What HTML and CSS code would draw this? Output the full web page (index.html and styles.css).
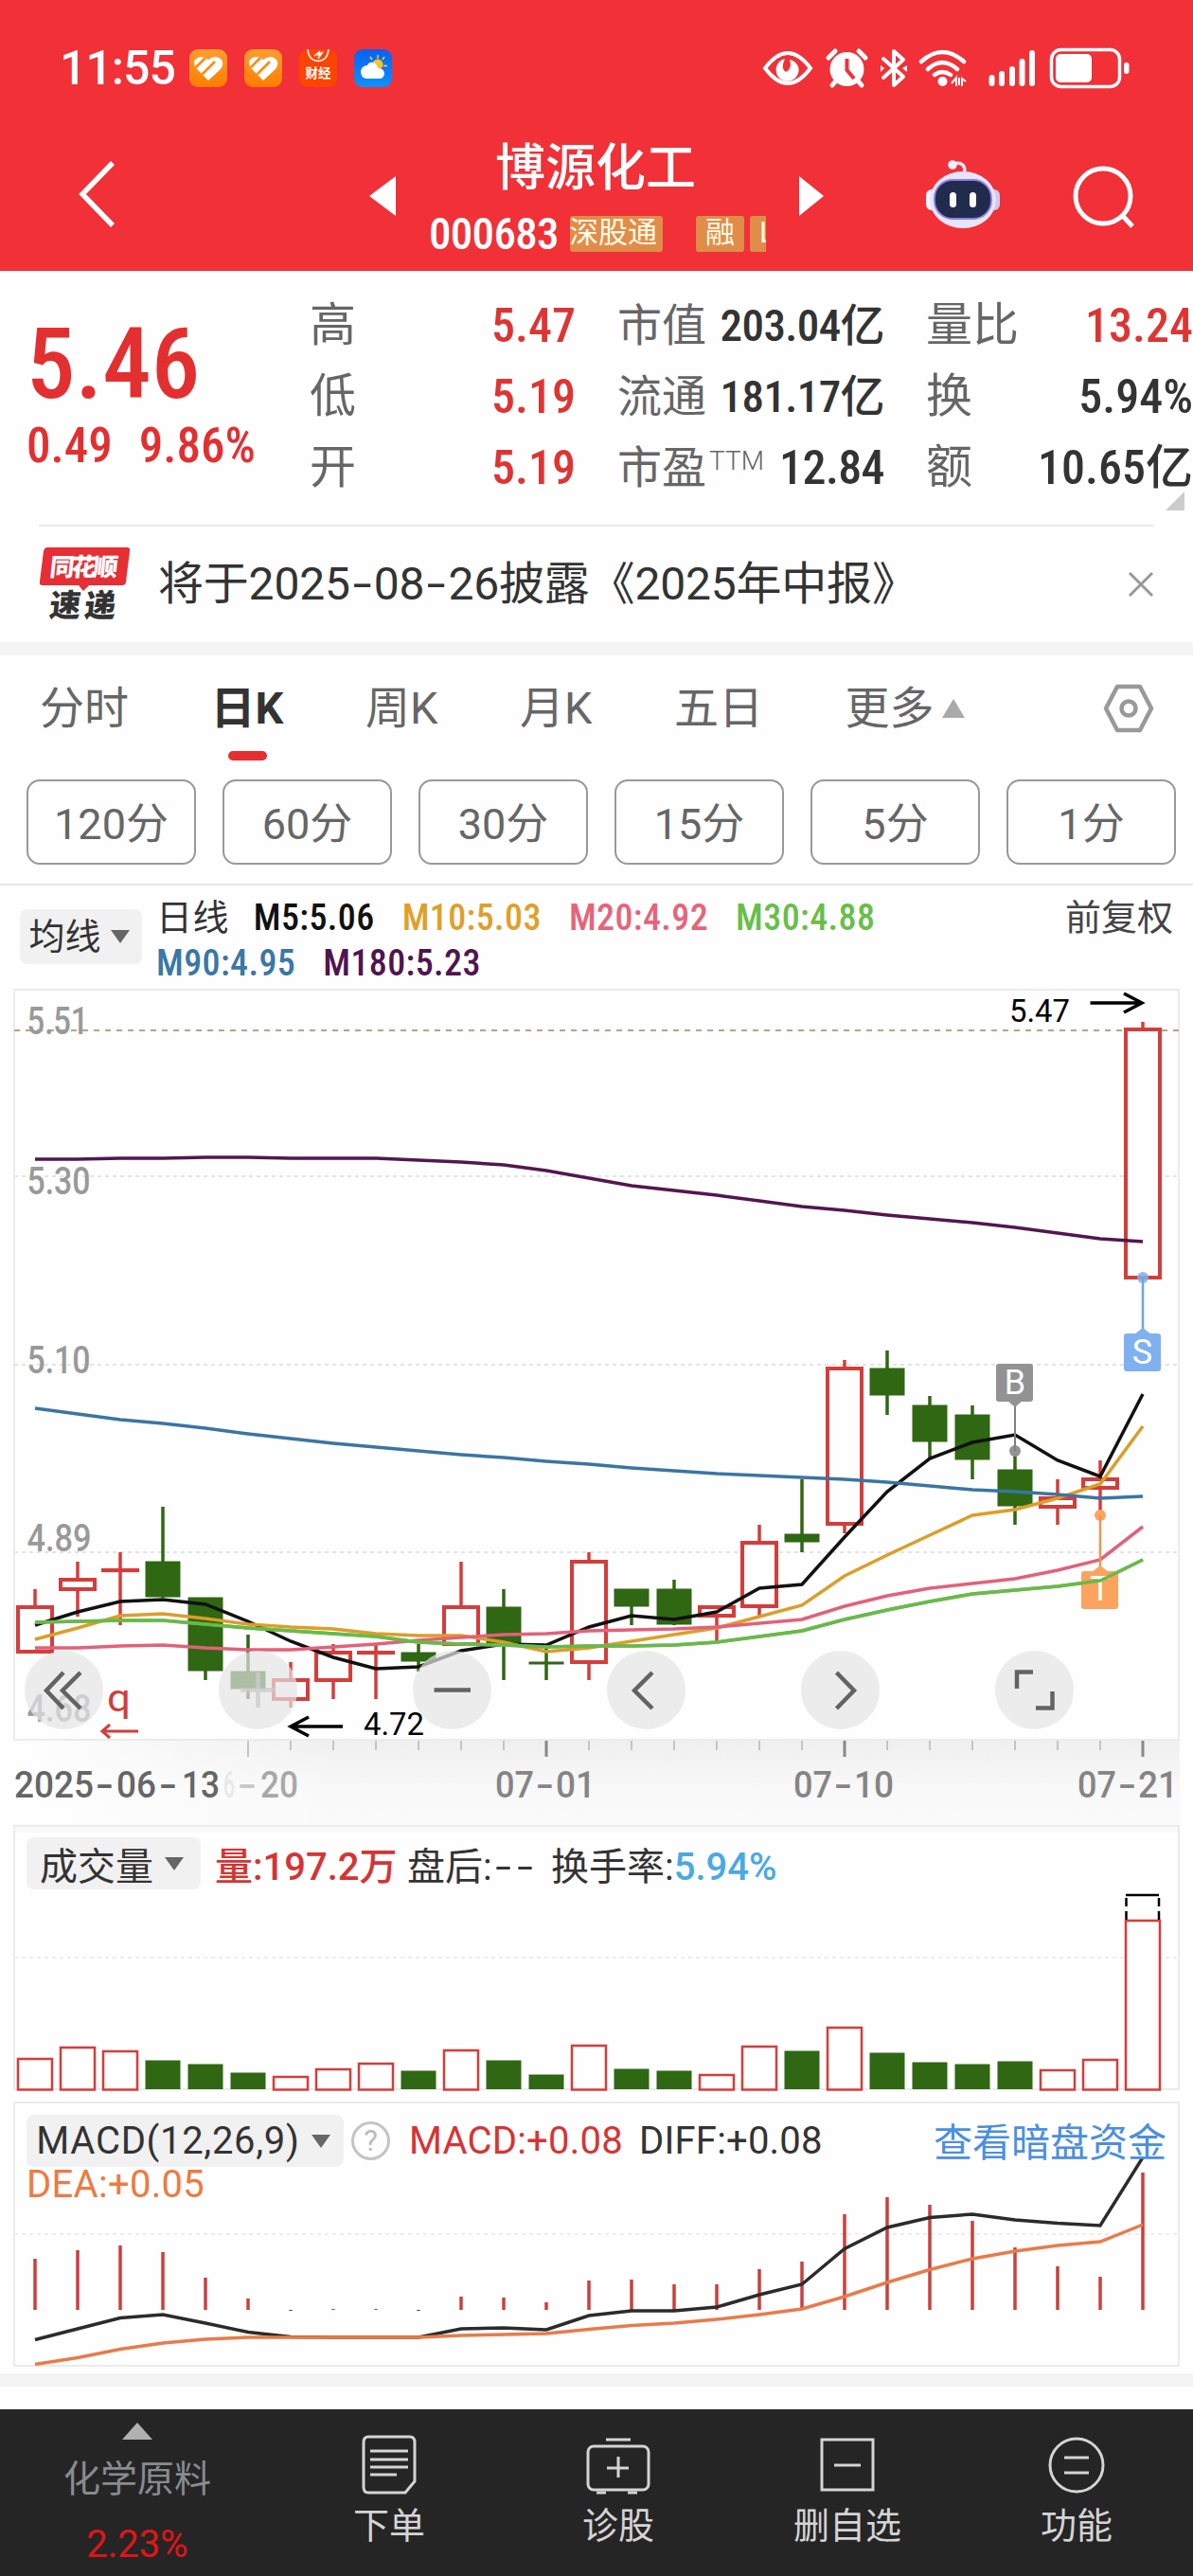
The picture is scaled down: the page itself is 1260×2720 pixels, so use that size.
FILE: index.html
```html
<!DOCTYPE html>
<html lang="zh-CN">

<head>
      <meta charset="UTF-8">
      <meta name="viewport" content="width=device-width, initial-scale=1.0">
      <title>博源化工 000683</title>
      <link rel="stylesheet" href="styles.css">
</head>

<body>
      <header class="top">
            <div class="status">
                  <span class="clock">11:55</span>
                  <div class="apps">
                        <svg width="40" height="40" viewBox="0 0 40 40">
                              <defs>
                                    <linearGradient id="orange" x2="0" y2="1">
                                          <stop offset="0" stop-color="#ff9d2e" />
                                          <stop offset="1" stop-color="#ff7d00" />
                                    </linearGradient>
                                    <clipPath id="heart">
                                          <path d="M20 33L8 21Q3 15 6 11Q12 5 20 11Q28 5 34 11Q37 16 33 21Z" />
                                    </clipPath>
                              </defs>
                              <rect width="40" height="40" rx="9" fill="url(#orange)" />
                              <g clip-path="url(#heart)">
                                    <rect width="40" height="40" fill="#fff" />
                                    <path d="M6 20L18 8M13 27L27 13" stroke="#ff8a10" stroke-width="2.6" />
                              </g>
                        </svg>
                        <svg width="40" height="40" viewBox="0 0 40 40">
                              <rect width="40" height="40" rx="9" fill="url(#orange)" />
                              <g clip-path="url(#heart)">
                                    <rect width="40" height="40" fill="#fff" />
                                    <path d="M6 20L18 8M13 27L27 13" stroke="#ff8a10" stroke-width="2.6" />
                              </g>
                        </svg>
                        <svg width="40" height="40" viewBox="0 0 40 40">
                              <rect width="40" height="40" rx="9" fill="#ff4300" />
                              <path d="M9 0Q10 12 20 12.500Q30 12 31 0" fill="none" stroke="#fff" stroke-width="1.500" />
                              <path d="M16 7L22 2L20 6L24 4L20 10" fill="none" stroke="#fff" stroke-width="1.500" />
                              <text x="6.500" y="30" font-size="13.500" font-weight="700" fill="#fff">财经</text>
                        </svg>
                        <svg width="40" height="40" viewBox="0 0 40 40">
                              <defs>
                                    <linearGradient id="sky" x2="0" y2="1">
                                          <stop offset="0" stop-color="#0a60ee" />
                                          <stop offset="1" stop-color="#0b92ff" />
                                    </linearGradient>
                              </defs>
                              <rect width="40" height="40" rx="9" fill="url(#sky)" />
                              <path d="M25 6V10M32 8L30 11M17 8L19 11M31 17.500H35" stroke="#ffd23c" stroke-width="1.400" />
                              <circle cx="25" cy="16" r="5.500" fill="#ffc423" />
                              <path d="M13 31Q7 30 7 23.500Q8 17 14 17Q16 13 20 14Q24 15 25 20Q32 20 32 26Q31 31 27 31Z" fill="#fff" />
                        </svg>
                  </div>
                  <svg class="signals" width="400" height="44" viewBox="800 50 400 44" fill="none" stroke="#fff">
                        <path d="M808 72Q832 40 856 72Q832 104 808 72Z" stroke-width="4" />
                        <path d="M829 62A12 12 0 1 0 843 70Q840 64 834 63Q837 73 830 76Q824 73 829 62Z" fill="#fff" stroke="none" />
                        <circle cx="894.500" cy="73" r="18" fill="#fff" stroke="none" />
                        <path d="M875 61L882 54M914 61L907 54M879 90L884 84M910 90L905 84" stroke-width="5" stroke-linecap="round" />
                        <path d="M894.500 62V74L902 83" stroke="#f13037" stroke-width="4" />
                        <path d="M933 62L954 81L944 90V54L954 63L933 82" stroke-width="4" stroke-linejoin="round" stroke-linecap="round" />
                        <path d="M930 69L934 72L930 76ZM958 69L953 72L958 76Z" fill="#fff" stroke="none" />
                        <path d="M973 65Q995 45 1018 65M980 73Q995 59 1011 73M987 79Q995 73 1004 79" stroke-width="4.500" stroke-linecap="round" />
                        <circle cx="995.500" cy="86" r="5" fill="#fff" stroke="none" />
                        <path d="M1005 88L1010 82V91M1013 82V90M1016 91V83L1020 86" stroke-width="2" />
                        <path d="M1047.500 82V88M1058 78V88M1069 73V88M1079.500 65V88M1090 56V88" stroke-width="6" stroke-linecap="round" />
                        <rect x="1110.500" y="52.500" width="72" height="39" rx="10" stroke-width="3.500" />
                        <rect x="1115" y="57" width="38" height="30" rx="5" fill="#fff" stroke="none" />
                        <rect x="1187" y="66" width="5.500" height="12" rx="2.700" fill="#fff" stroke="none" />
                  </svg>
            </div>
            <nav class="title-bar">
                  <svg class="back" width="44" height="74" viewBox="0 0 44 74">
                        <path d="M39 4L7 37L39 70" fill="none" stroke="#fff" stroke-width="5.500" />
                  </svg>
                  <svg class="prev" width="28" height="42" viewBox="0 0 28 42">
                        <path d="M28 0V42L0 21Z" fill="#fff" />
                  </svg>
                  <div class="stock">
                        <h1>博源化工</h1>
                        <div class="code-row">
                              <span class="code">000683</span>
                              <span class="tag cut-left">深股通</span>
                              <span class="tag rong">融</span>
                              <span class="tag cut-right">L</span>
                        </div>
                  </div>
                  <svg class="next" width="28" height="42" viewBox="0 0 28 42">
                        <path d="M0 0V42L26 21Z" fill="#fff" />
                  </svg>
                  <svg class="robot" width="80" height="76" viewBox="0 0 80 76">
                        <path d="M30 6Q42 3 42 14" fill="none" stroke="#e8e2f5" stroke-width="3.500" />
                        <circle cx="29" cy="7" r="4.800" fill="#f2eefb" />
                        <rect x="1" y="33" width="12" height="22" rx="6" fill="#f4f3ff" />
                        <rect x="67" y="33" width="12" height="22" rx="6" fill="#cfc9f2" />
                        <ellipse cx="40" cy="44" rx="35" ry="30" fill="#e6e5fa" />
                        <rect x="10" y="23" width="60" height="41" rx="19" fill="#212b4e" stroke="#8c80e8" stroke-width="1.800" />
                        <rect x="26" y="36" width="7" height="16" rx="3.500" fill="#fff" />
                        <rect x="47" y="36" width="7" height="16" rx="3.500" fill="#fff" />
                  </svg>
                  <svg class="search" width="70" height="70" viewBox="0 0 70 70" fill="none" stroke="#fff" stroke-width="5">
                        <circle cx="34" cy="34" r="29" />
                        <path d="M54 54L65 66" />
                  </svg>
            </nav>
      </header>

      <section class="quote">
            <div class="price">
                  <div class="last">5.46</div>
                  <div class="change"><span>0.49</span><span>9.86%</span></div>
            </div>
            <dl class="facts">
                  <div><dt>高</dt><dd class="up">5.47</dd></div>
                  <div><dt>低</dt><dd class="up">5.19</dd></div>
                  <div><dt>开</dt><dd class="up">5.19</dd></div>
            </dl>
            <dl class="facts small">
                  <div><dt>市值</dt><dd>203.04亿</dd></div>
                  <div><dt>流通</dt><dd>181.17亿</dd></div>
                  <div class="pe"><dt>市盈<sup>TTM</sup></dt><dd>12.84</dd></div>
            </dl>
            <dl class="facts">
                  <div><dt>量比</dt><dd class="up">13.24</dd></div>
                  <div><dt>换</dt><dd>5.94%</dd></div>
                  <div><dt>额</dt><dd>10.65亿</dd></div>
            </dl>
            <i class="corner"></i>
      </section>

      <section class="news">
            <svg width="98" height="80" viewBox="0 0 98 80">
                  <path d="M9 1H93Q97 1 96 5L92 37Q92 41 88 41H53L47 47L42 41H4Q0 41 1 37L5 5Q6 1 9 1Z" fill="#e62e34" />
                  <text x="15" y="31" font-size="26" font-weight="900" fill="#fff" textLength="72" transform="skewX(-6) translate(-1 0)">同花顺</text>
                  <text x="15" y="74" font-size="33" font-weight="900" fill="#333" textLength="70" transform="skewX(-6) translate(3 0)">速递</text>
            </svg>
            <p>将于2025<b>-</b>08<b>-</b>26披露《2025年中报》</p>
            <svg class="close" width="28" height="28" viewBox="0 0 28 28" stroke="#999" stroke-width="3">
                  <path d="M2 2L26 26M26 2L2 26" />
            </svg>
      </section>

      <section class="tabs">
            <span class="tab">分时</span>
            <span class="tab active">日K</span>
            <span class="tab">周K</span>
            <span class="tab">月K</span>
            <span class="tab">五日</span>
            <span class="tab more">更多<i></i></span>
            <svg width="54" height="52" viewBox="0 0 54 52" fill="none" stroke="#999" stroke-width="4.500" stroke-linejoin="round">
                  <path d="M15 3H39L51 26L39 49H15L3 26Z" />
                  <circle cx="27" cy="26" r="7.500" />
            </svg>
      </section>

      <section class="periods">
            <button type="button">120分</button>
            <button type="button">60分</button>
            <button type="button">30分</button>
            <button type="button">15分</button>
            <button type="button">5分</button>
            <button type="button">1分</button>
      </section>

      <section class="ma-bar">
            <span class="chip">均线<i></i></span>
            <div class="ma-list">
                  <span>日线</span>
                  <span class="m5">M5:5.06</span>
                  <span class="m10">M10:5.03</span>
                  <span class="m20">M20:4.92</span>
                  <span class="m30">M30:4.88</span>
                  <span class="m90">M90:4.95</span>
                  <span class="m180">M180:5.23</span>
            </div>
            <span class="adjust">前复权</span>
      </section>

      <section class="panel kline">
            <svg id="kline" width="1260" height="886" viewBox="0 1040 1260 886"></svg>
      </section>

      <section class="panel volume">
            <svg id="volume" width="1260" height="286" viewBox="0 1926 1260 286"></svg>
            <div class="legend">
                  <span class="chip">成交量<i></i></span>
                  <span class="vol">量:197.2万</span>
                  <span class="after">盘后:<b>-</b><b>-</b></span>
                  <span class="turnover">换手率:<em>5.94%</em></span>
            </div>
      </section>

      <section class="panel macd">
            <svg id="macd" width="1260" height="294" viewBox="0 2212 1260 294"></svg>
            <div class="legend">
                  <span class="chip">MACD(12,26,9)<i></i></span>
                  <span class="help">?</span>
                  <span class="bar">MACD:+0.08</span>
                  <span class="diff">DIFF:+0.08</span>
                  <a class="link">查看暗盘资金</a>
            </div>
            <div class="dea">DEA:+0.05</div>
      </section>

      <footer class="dock">
            <div class="sector">
                  <i></i>
                  <span>化学原料</span>
                  <b>2.23%</b>
            </div>
            <div class="item">
                  <svg width="68" height="66" viewBox="0 0 68 66">
                        <path d="M12 3H56Q61 3 61 9V50L51 62H12Q7 62 7 56V9Q7 3 12 3Z" />
                        <path d="M14 18H54M14 27H54M14 35H54M14 43H42" />
                  </svg>
                  <span>下单</span>
            </div>
            <div class="item">
                  <svg width="68" height="66" viewBox="0 0 68 66">
                        <rect x="2" y="13" width="64" height="46" rx="6" />
                        <path d="M21 6H47M34 24V46M22 36H45M11 62H21M44 62H54" />
                  </svg>
                  <span>诊股</span>
            </div>
            <div class="item">
                  <svg width="68" height="66" viewBox="0 0 68 66">
                        <rect x="7" y="6" width="54" height="53" />
                        <path d="M20 33H48" />
                  </svg>
                  <span>删自选</span>
            </div>
            <div class="item">
                  <svg width="68" height="66" viewBox="0 0 68 66">
                        <circle cx="34" cy="33" r="28" />
                        <path d="M21 25H47M21 41H47" />
                  </svg>
                  <span>功能</span>
            </div>
      </footer>
      <script src="chart.js"></script>
</body>

</html>
```
FILE: styles.css
```css
* {
      box-sizing: border-box;
}

body {
      margin: 0;
      width: 1260px;
      height: 2720px;
      overflow: hidden;
      background-color: #fefefe;
      color: #333;
      font-family: Roboto, "Noto Sans CJK SC", sans-serif;
}

h1,
p,
dl,
dd {
      margin: 0;
}

svg {
      display: block;
      flex: none;
}

/* red header */
.top {
      height: 286px;
      background-color: #f13037;
      color: #fff;
}

.status {
      display: flex;
      align-items: center;
      height: 144px;
      padding-left: 63px;
}

.clock {
      width: 137px;
      font-size: 50px;
      line-height: 60px;
      letter-spacing: -1px;
      font-weight: 500;
      font-stretch: 97%;
}

.apps {
      display: flex;
      gap: 18px;
}

.signals {
      margin-left: 386px;
}

.title-bar {
      display: flex;
      height: 142px;
      padding-left: 80px;
}

.back {
      margin-top: 24px;
}

.prev {
      margin: 42px 0 0 266px;
}

.stock {
      width: 392px;
      margin-left: 35px;
      overflow: hidden;
}

.stock h1 {
      margin-top: -1px;
      padding-left: 70px;
      font-size: 53px;
      font-weight: 500;
      line-height: 70px;
}

.code-row {
      display: flex;
      height: 44px;
      align-items: center;
      margin-top: 12px;
      width: 356px;
      overflow: hidden;
}

.code {
      width: 149px;
      flex: none;
      font-size: 47px;
      line-height: 44px;
      font-weight: 500;
      font-stretch: 85%;
      letter-spacing: -0.7px;
}

.tag {
      flex: none;
      height: 38px;
      border-radius: 3px;
      background-color: #e18d4a;
      color: #fffbe6;
      font-size: 31px;
      line-height: 36px;
      text-align: center;
}

.cut-left {
      width: 98px;
      text-indent: -7px;
}

.rong {
      width: 51px;
      margin-left: 35px;
}

.cut-right {
      width: 40px;
      margin-left: 6px;
      text-align: left;
      padding-left: 10px;
}

.next {
      margin: 42px 0 0 -1px;
}

.robot {
      margin: 23px 0 0 105px;
}

.search {
      margin: 29px 0 0 74px;
}

/* price block */
.quote {
      position: relative;
      display: grid;
      grid-template-columns: 283px 281px 282px 282px;
      column-gap: 44px;
      height: 268px;
      padding-top: 20px;
      font-stretch: 87%;
}

.price {
      padding-left: 28px;
      color: #e42f30;
      white-space: nowrap;
}

.last {
      margin-top: 24px;
      font-size: 103px;
      font-weight: 500;
      line-height: 110px;
}

.change {
      display: flex;
      gap: 28px;
      margin-top: 1px;
      font-size: 51px;
      font-weight: 500;
      line-height: 60px;
      font-stretch: 80%;
}

.facts > div {
      display: flex;
      justify-content: space-between;
      align-items: center;
      height: 75px;
      white-space: nowrap;
}

.facts dt {
      font-size: 49px;
      line-height: 60px;
      color: #666;
}

.facts dd {
      font-size: 50px;
      font-weight: 500;
      line-height: 60px;
}

.facts.small dt,
.facts.small dd {
      font-size: 47px;
}

.facts.small dd {
      letter-spacing: -0.6px;
}

.facts.small .pe dd {
      font-size: 50px;
}

.facts sup {
      font-size: 28px;
      font-stretch: 94%;
      line-height: 1;
      position: relative;
      top: 9px;
      left: 3px;
      font-weight: 300;
      vertical-align: top;
}

.up {
      color: #e03333;
}

.corner {
      position: absolute;
      right: 9px;
      bottom: 15px;
      border-left: 20px solid transparent;
      border-bottom: 20px solid #ccc;
}

/* announcement */
.news {
      display: flex;
      align-items: center;
      height: 124px;
      margin: 0 41px;
      border-top: 2px solid #ebebeb;
}

.news p {
      margin-left: 28px;
      flex: 1;
      font-size: 48px;
      line-height: 60px;
      letter-spacing: -0.2px;
      white-space: nowrap;
}

.news b,
.legend b {
      display: inline-block;
      font-weight: inherit;
      transform: scaleX(1.5);
      margin: 0 6px;
}

/* chart tabs */
.tabs {
      display: flex;
      align-items: center;
      height: 139px;
      border-top: 14px solid #f4f4f4;
      padding: 0 41px 14px 42px;
      font-size: 47px;
      line-height: 60px;
      color: #666;
}

.tab {
      position: relative;
      margin-right: 69px;
      white-space: nowrap;
}

.tab + .tab {
      margin-left: 17.5px;
}

.active {
      font-weight: 700;
      color: #333;
}

.active::after {
      content: "";
      position: absolute;
      left: 18px;
      bottom: -25px;
      width: 41px;
      height: 10px;
      border-radius: 5px;
      background-color: #e62e30;
}

.more {
      display: flex;
      align-items: center;
      gap: 9px;
}

.more i {
      border: 12px solid transparent;
      border-top: 0;
      border-bottom: 20px solid #aaa;
}

.tabs svg {
      margin-left: auto;
}

.periods {
      display: flex;
      gap: 28px;
      height: 118px;
      padding: 6px 18px 0 28px;
      border-bottom: 2px solid #e6e6e6;
}

.periods button {
      flex: 1;
      height: 90px;
      padding: 0 0 4px;
      border: 2px solid #999;
      border-radius: 14px;
      background: none;
      color: #666;
      font: inherit;
      font-size: 45px;
}

/* moving averages */
.ma-bar {
      display: flex;
      height: 105px;
      padding: 10px 21px 0 21px;
      font-size: 38px;
      line-height: 48px;
}

.chip {
      display: flex;
      align-items: center;
      justify-content: center;
      gap: 12px;
      border-radius: 8px;
      background-color: #f1f1f1;
      white-space: nowrap;
}

.chip i {
      border: 10px solid transparent;
      border-bottom: 0;
      border-top: 14px solid #666;
}

.ma-bar .chip {
      width: 129px;
      height: 58px;
      margin-top: 15px;
      padding-right: 4px;
      gap: 10px;
}

.ma-list {
      display: flex;
      flex-wrap: wrap;
      align-content: flex-start;
      column-gap: 29px;
      width: 850px;
      margin-left: 15px;
      font-weight: 500;
      font-stretch: 87%;
      letter-spacing: 0.4px;
}

.ma-list span:first-child {
      font-weight: 400;
      margin-right: -3px;
}

.m5 {
      color: #111;
}

.m10 {
      color: #dfa02a;
}

.m20 {
      color: #e8637a;
}

.m30 {
      color: #69be4a;
}

.m90 {
      color: #3a77a5;
      margin-right: 100px;
}

.m90 + .m180 {
      margin-left: -100px;
      color: #501450;
}

.adjust {
      margin-left: auto;
      color: #444;
}

/* chart panels, the legends lie over the drawing */
.panel {
      position: relative;
}

.panel text {
      font-family: Roboto, "Noto Sans CJK SC", sans-serif;
}

.legend {
      position: absolute;
      left: 28px;
      top: 14px;
      width: 1204px;
      display: flex;
      align-items: center;
      height: 55px;
      font-size: 40px;
      white-space: nowrap;
}

.legend .chip {
      height: 55px;
}

.volume .chip {
      width: 184px;
      margin-right: 15px;
      padding-right: 4px;
}

.vol {
      width: 203px;
      color: #d63434;
      font-weight: 500;
      font-stretch: 89%;
}

.after {
      width: 152px;
}

.turnover em {
      font-style: normal;
      font-weight: 500;
      font-stretch: 91%;
      color: #49a9e4;
}

.macd .legend {
      top: 21px;
      letter-spacing: 0.2px;
}

.macd .chip {
      width: 335px;
      padding-right: 4px;
      letter-spacing: 0.7px;
}

.help {
      width: 41px;
      height: 41px;
      margin: 0 20px 0 8px;
      border: 3px solid #c4c4c4;
      border-radius: 50%;
      color: #bbb;
      font-size: 31px;
      line-height: 36px;
      text-align: center;
      letter-spacing: 0;
}

.bar {
      width: 243px;
      color: #d63434;
}

.link {
      margin-left: auto;
      padding-bottom: 4px;
      letter-spacing: 0;
      font-size: 41px;
      color: #4a8fe0;
}

.dea {
      position: absolute;
      left: 28px;
      top: 71px;
      font-size: 40px;
      line-height: 48px;
      letter-spacing: 0.3px;
      color: #ee7a42;
}

/* bottom dock */
.dock {
      display: flex;
      height: 214px;
      border-top: 14px solid #f4f4f4;
      padding-top: 24px;
      color: #d4d4d4;
      font-size: 38px;
      background: linear-gradient(#fff 24px, #252525 24px);
}

.sector {
      display: flex;
      flex-direction: column;
      align-items: center;
      width: 290px;
}

.sector i {
      margin-top: 14px;
      border: 16px solid transparent;
      border-top: 0;
      border-bottom: 18px solid #b0b0b0;
}

.sector span {
      margin-top: 16px;
      font-size: 39px;
      line-height: 52px;
      color: #868c91;
}

.sector b {
      margin-top: 19px;
      font-size: 40px;
      font-weight: 400;
      line-height: 48px;
      color: #e01515;
}

.item {
      display: flex;
      flex-direction: column;
      align-items: center;
      width: 242px;
      padding-top: 26px;
}

.item svg {
      fill: none;
      stroke: #d4d4d4;
      stroke-width: 3;
}

.item span {
      margin-top: 6px;
      line-height: 50px;
}
```
FILE: chart.js
```js
const RED = "#d43d3b";
const GREEN = "#2f6713";
const STEP = 45;
const x = i => 37 + STEP * i;

// [up, high, body top, body bottom, low]
const candles = [
      [1, 1678, 1697, 1744, 1744], [1, 1649, 1668, 1678, 1707], [1, 1639, 1658, 1658, 1716],
      [0, 1591, 1649, 1687, 1687], [0, 1687, 1687, 1765, 1774], [0, 1726, 1765, 1784, 1794],
      [1, 1755, 1774, 1794, 1803], [1, 1736, 1745, 1774, 1794], [1, 1736, 1745, 1745, 1794],
      [0, 1736, 1745, 1755, 1765], [1, 1649, 1697, 1736, 1736], [0, 1678, 1697, 1736, 1774],
      [0, 1736, 1755, 1755, 1774], [1, 1639, 1649, 1755, 1774], [0, 1678, 1678, 1697, 1716],
      [0, 1668, 1678, 1716, 1716], [1, 1697, 1697, 1706, 1735], [1, 1610, 1629, 1696, 1706],
      [0, 1562, 1620, 1629, 1639], [1, 1436, 1445, 1609, 1619], [0, 1426, 1445, 1474, 1494],
      [0, 1474, 1484, 1523, 1540], [0, 1484, 1494, 1542, 1562], [0, 1532, 1552, 1591, 1610],
      [1, 1562, 1582, 1591, 1610], [1, 1542, 1562, 1571, 1600], [1, 1079, 1087, 1349, 1349]
];

// moving averages
const averages = [
      ["#53164f", [1224, 1224, 1223, 1223, 1222, 1222, 1223, 1223, 1223, 1225, 1227, 1230, 1236, 1244, 1252, 1257, 1262, 1268, 1274, 1278, 1283, 1287, 1291, 1296, 1302, 1308, 1311]],
      ["#111", [1716, 1702, 1691, 1689, 1694, 1712, 1733, 1750, 1762, 1760, 1743, 1736, 1737, 1718, 1706, 1710, 1702, 1677, 1673, 1623, 1575, 1540, 1523, 1515, 1542, 1559, 1472]],
      ["#dc9e28", [1731, 1719, 1706, 1704, 1709, 1715, 1718, 1720, 1725, 1727, 1727, 1734, 1744, 1740, 1733, 1726, 1719, 1707, 1695, 1664, 1642, 1621, 1600, 1594, 1582, 1567, 1506]],
      ["#e4607a", [1740, 1740, 1738, 1737, 1740, 1742, 1742, 1739, 1736, 1732, 1729, 1726, 1725, 1722, 1721, 1720, 1718, 1714, 1710, 1696, 1685, 1677, 1672, 1667, 1658, 1647, 1612]],
      ["#69b94b", [1713, 1712, 1711, 1711, 1715, 1719, 1722, 1725, 1728, 1734, 1736, 1737, 1739, 1738, 1738, 1737, 1734, 1728, 1722, 1710, 1700, 1691, 1683, 1679, 1675, 1669, 1647]],
      ["#3a75a3", [1487, 1493, 1499, 1503, 1508, 1514, 1519, 1524, 1528, 1532, 1536, 1539, 1543, 1546, 1550, 1553, 1556, 1558, 1560, 1562, 1565, 1569, 1573, 1575, 1578, 1582, 1580]]
];

const volumes = [2174, 2162, 2166, 2176, 2180, 2189, 2193, 2185, 2179, 2187, 2165, 2176, 2191, 2160, 2185, 2187, 2191, 2161, 2166, 2141, 2168, 2178, 2180, 2177, 2186, 2175, 2028];
const macdBars = [2385, 2376, 2371, 2378, 2405, 2427, 2439, 2438, 2438, 2439, 2425, 2426, 2431, 2408, 2407, 2412, 2412, 2396, 2388, 2338, 2320, 2328, 2345, 2373, 2393, 2404, 2294];
const diff = [2470.5, 2459, 2447.5, 2444, 2453, 2462.5, 2467.5, 2468, 2468, 2468, 2459, 2458, 2460, 2445, 2440, 2440, 2436, 2423, 2412, 2374.5, 2352, 2341.5, 2338, 2344, 2347.5, 2350, 2278];
const dea = [2496.5, 2489.5, 2480.5, 2474, 2470, 2468, 2468, 2468, 2468, 2468, 2466, 2465, 2464, 2459.5, 2455.5, 2453, 2449, 2444, 2438, 2425, 2410, 2396.5, 2385, 2377, 2371, 2367, 2349];

const line = (x1, y1, x2, y2, color, width, extra = "") =>
      `<line x1="${x1}" y1="${y1}" x2="${x2}" y2="${y2}" stroke="${color}" stroke-width="${width}" ${extra}/>`;
const dash = (y, color = "#e4e4e4", width = 2) => line(15, y, 1245, y, color, width, 'stroke-dasharray="4 4"');
const curve = (ys, color) =>
      `<polyline points="${ys.map((y, i) => x(i) + "," + y).join(" ")}" fill="none" stroke="${color}" stroke-width="3.5"/>`;
const frame = (top, bottom) =>
      `<rect x="15" y="${top}" width="1230" height="${bottom - top}" fill="none" stroke="#ebebeb" stroke-width="2"/>`;
// text squeezed to the given width
const label = (s, left, y, width, size, color, extra = "") =>
      `<text x="${left}" y="${y}" font-size="${size}" fill="${color}" textLength="${width}" lengthAdjust="spacingAndGlyphs" ${extra}>${s}</text>`;
const box = (i, top, bottom, up, stroke) => up
      ? `<rect x="${x(i) - 18}" y="${top}" width="36" height="${Math.max(bottom - top, 0.1)}" fill="#fefefe" stroke="${RED}" stroke-width="${stroke}"/>`
      : `<rect x="${x(i) - 18.5}" y="${top - 0.5}" width="37" height="${Math.max(bottom - top, 3)}" fill="${GREEN}"/>`;

// k line
let svg = frame(1045, 1837);
svg += dash(1242) + dash(1441) + dash(1639);
svg += line(15, 1088, 1245, 1088, "#b8a67e", 2, 'stroke-dasharray="6 6"');
[["5.51", 1092, 65], ["5.30", 1261, 67], ["5.10", 1450, 67], ["4.89", 1638, 68], ["4.68", 1818, 68]].forEach(([s, y, w]) => {
      svg += label(s, 28.5, y, w, 40, "#999", 'font-weight="500"');
});
candles.forEach(([up, high, top, bottom, low], i) => {
      const c = up ? RED : GREEN;
      svg += line(x(i), high, x(i), low, c, 3.5) + box(i, top, bottom, up, 4);
});
averages.forEach(([color, ys]) => svg += curve(ys, color));

// trade markers
svg += `<g fill="#7fb1f0"><circle cx="1207" cy="1349" r="6" opacity=".85"/>${line(1207, 1349, 1207, 1404, "#6fa3e6", 2.5)}
      <path d="M1198 1409L1207 1402L1216 1409Z"/><rect x="1187" y="1408" width="39" height="40" rx="3"/></g>`;
svg += `<g fill="#929292"><circle cx="1072" cy="1532" r="6"/>${line(1072, 1484, 1072, 1532, "#808080", 2)}
      <path d="M1063 1478L1072 1486L1081 1478Z"/><rect x="1052" y="1440" width="39" height="40" rx="3"/></g>`;
svg += `<g fill="#fca35e"><circle cx="1162" cy="1600" r="6"/>${line(1162, 1600, 1162, 1655, "#ee9450", 2.5)}
      <path d="M1153 1660L1162 1653L1171 1660Z"/><rect x="1142" y="1659" width="39" height="40" rx="3"/></g>`;
svg += `<g fill="#fff" font-size="36" text-anchor="middle"><text x="1206.5" y="1440">S</text>
      <text x="1072" y="1472">B</text><text x="1162" y="1690">T</text></g>`;
svg += curve(averages[4][1], "#69b94b");

svg += label("5.47", 1066, 1079, 64, 34, "#000");
svg += `<path d="M1151.500 1059H1206M1187 1049L1206 1059L1187 1069" fill="none" stroke="#000" stroke-width="3.500"/>`;
svg += label("4.72", 384, 1832, 64, 34, "#000");
svg += `<path d="M362 1823H307M326 1813L307 1823L326 1833" fill="none" stroke="#000" stroke-width="3.500"/>`;
svg += label("q", 113, 1807, 25, 40, RED);
svg += `<path d="M146 1828H108M116 1821L108 1828L116 1835" fill="none" stroke="${RED}" stroke-width="3"/>`;

// floating controls
const icons = [
      "M67 1766L49 1785L67 1804M85 1766L66 1785L85 1804",
      "",
      "M458.500 1784.500H497",
      "M689 1766L670 1785L689 1804",
      "M883.500 1766L902 1785L883.500 1804",
      "M1074 1783V1765.500H1091M1111.500 1786V1803.500H1094"
];
icons.forEach((d, i) => {
      const cx = 67.5 + 205 * i;
      svg += `<circle cx="${cx}" cy="1784.500" r="41.500" fill="#e4e4e4" fill-opacity=".7"/>`;
      svg += `<path d="${d}" fill="none" stroke="#636363" stroke-width="4.500"/>`;
});
svg += `<path d="M254 1784.500H291M272.500 1766V1803" stroke="#ccc" stroke-opacity=".8" stroke-width="4.500"/>`;

// time axis
svg += `<defs>
      <linearGradient id="shade" x2="0" y2="1"><stop offset="0" stop-color="#efefef"/><stop offset=".6" stop-color="#f9f9f9"/><stop offset="1" stop-color="#fafafa"/></linearGradient>
      <linearGradient id="fade"><stop offset="0" stop-color="#fefefe"/><stop offset="1" stop-color="#fefefe" stop-opacity="0"/></linearGradient>
      </defs><rect x="15" y="1838" width="1231" height="88" fill="url(#shade)"/>
      <rect x="15" y="1838" width="345" height="88" fill="url(#fade)"/>`;
for (let i = 5; i < 27; i++) {
      const major = i > 5 && (i - 5) % 7 === 0;
      svg += line(x(i), 1838, x(i), major || i === 5 ? 1855 : 1848, major ? "#888" : "#c4c4c4", major ? 3 : 2);
}
svg += `<g font-weight="500">${label("6", 236, 1898, 12, 39, "#e8e8e8")}${label("-", 251, 1898, 20, 39, "#c8c8c8")}${label("20", 275, 1898, 40, 39, "#a8a8a8")}
      ${label("2025", 15, 1898, 84, 39, "#666")}${label("-", 101, 1898, 19, 39, "#666")}${label("06", 123, 1898, 42, 39, "#666")}${label("-", 168, 1898, 19, 39, "#666")}${label("13", 192, 1898, 40, 39, "#666")}</g>`;
[["07", "01", 523], ["07", "10", 838], ["07", "21", 1138]].forEach(([m, d, left]) => {
      svg += label(m, left, 1898, 41, 39, "#858585", 'font-weight="500"') + label("-", left + 43, 1898, 19, 39, "#858585", 'font-weight="500"')
            + label(d, left + 64, 1898, 42, 39, "#858585", 'font-weight="500"');
});
document.getElementById("kline").innerHTML = svg;

// volume
svg = `<rect x="15" y="1926" width="1231" height="9" fill="#fafafa"/>` + frame(1928, 2206) + dash(2067, "#ececec");
volumes.forEach((top, i) => svg += box(i, top, 2206.5, candles[i][0], 2.5));
svg += `<path d="M1189 2001H1224" stroke="#000" stroke-width="2.500"/>
      <path d="M1189.500 2027V2018M1189.500 2013V2004M1224 2027V2018M1224 2013V2004" stroke="#000" stroke-width="2.500"/>`;
document.getElementById("volume").innerHTML = svg;

// macd
svg = frame(2220, 2498) + dash(2359, "#ececec");
macdBars.forEach((top, i) => {
      svg += line(x(i), top, x(i), top === 2439 ? 2440 : 2439, top === 2439 ? GREEN : "#cb3f3f", 3.5);
});
svg += curve(diff, "#2b2b2b") + curve(dea, "#e87b4a");
document.getElementById("macd").innerHTML = svg;
```
